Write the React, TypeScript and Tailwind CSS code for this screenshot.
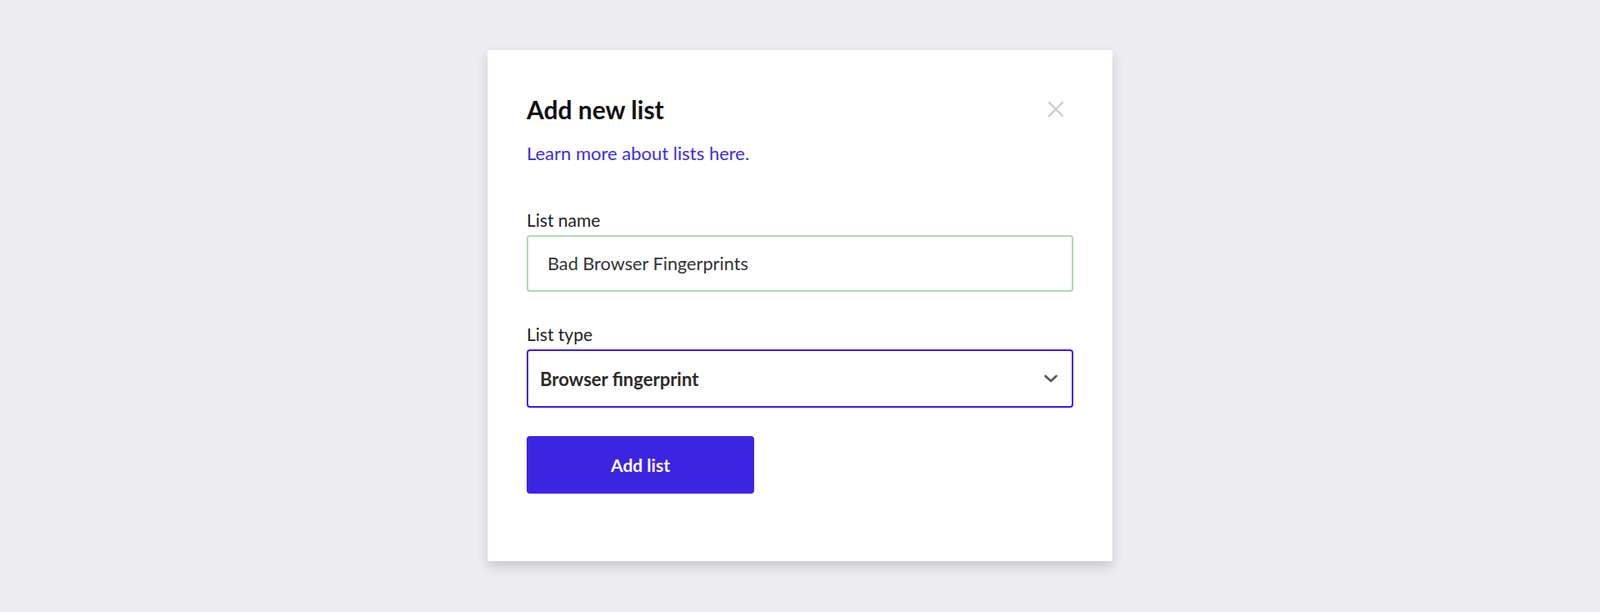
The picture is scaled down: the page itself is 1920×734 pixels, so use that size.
import { useState } from 'react';

// Modal "Add new list" sur fond gris clair
export default function App() {
  const [listName, setListName] = useState('Bad Browser Fingerprints');
  const [listType, setListType] = useState('browser_fingerprint');

  return (
    <div
      className="min-h-screen w-full bg-[#edecf1] flex justify-center"
      style={{ fontFamily: 'Lato, "Open Sans", sans-serif' }}
    >
      <div className="mt-[60px] w-[750px] h-[613px] bg-white rounded-[2px] shadow-[0_6px_14px_rgba(0,0,0,0.16)] px-[47px] pt-[52px]">
        <div className="flex items-center justify-between">
          <h1 className="text-[30px] leading-[38px] font-bold text-[#111111]">Add new list</h1>
          <button className="mr-[11px] text-[#c9c9c9]" aria-label="Fermer">
            <svg width="20" height="20" viewBox="0 0 20 20" fill="none" stroke="currentColor" strokeWidth="2.2" strokeLinecap="round">
              <path d="M2 2L18 18M18 2L2 18" />
            </svg>
          </button>
        </div>

        <a href="#" className="block mt-[20px] text-[22px] leading-[28px] text-[#3a2ee6]">
          Learn more about lists here.
        </a>

        <form className="mt-[53px]" onSubmit={(e) => e.preventDefault()}>
          <label className="block text-[21px] leading-[26px] text-[#222222]">List name</label>
          <input
            value={listName}
            onChange={(e) => setListName(e.target.value)}
            className="mt-[5px] block w-full h-[68px] rounded-[4px] border-2 border-[#a8ddb0] px-[23px] text-[21.7px] text-[#333333] outline-none"
          />

          <label className="block mt-[38px] text-[21px] leading-[26px] text-[#222222]">List type</label>
          <div className="relative mt-[5px]">
            <select
              value={listType}
              onChange={(e) => setListType(e.target.value)}
              className="appearance-none block w-full h-[70px] rounded-[4px] border-2 border-[#3a1cf2] bg-white px-[14px] text-[22px] font-bold text-[#2b2b2b] outline-none"
            >
              <option value="browser_fingerprint">Browser fingerprint</option>
              <option value="ip">IP address</option>
              <option value="email">Email</option>
            </select>
            <svg
              className="pointer-events-none absolute right-[18px] top-1/2 -translate-y-1/2 text-[#555555]"
              width="18"
              height="12"
              viewBox="0 0 18 12"
              fill="none"
              stroke="currentColor"
              strokeWidth="2.6"
              strokeLinecap="round"
              strokeLinejoin="round"
            >
              <path d="M2.5 3L9 9L15.5 3" />
            </svg>
          </div>

          <button
            type="submit"
            className="mt-[34px] w-[273px] h-[69px] rounded-[4px] bg-[#3c25e0] text-white text-[21px] font-bold"
          >
            Add list
          </button>
        </form>
      </div>
    </div>
  );
}
